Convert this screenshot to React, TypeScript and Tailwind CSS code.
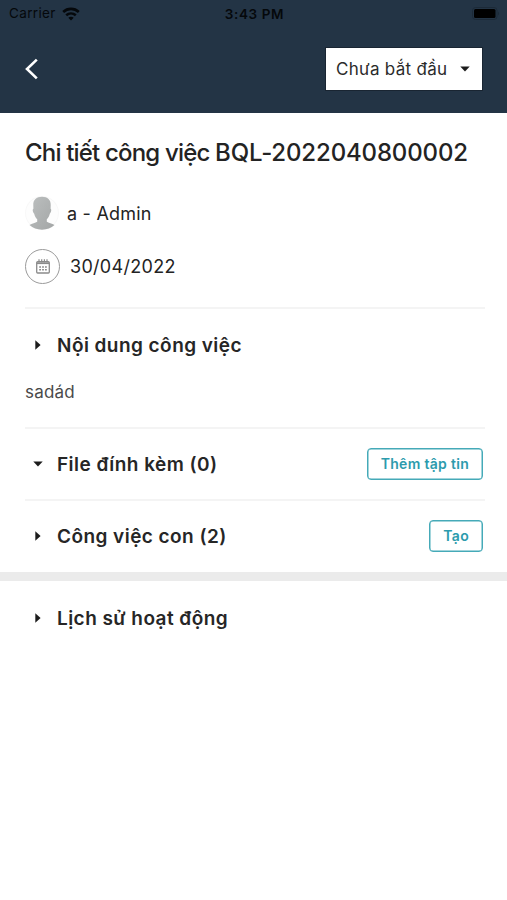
import type { ReactNode } from "react";

const Wifi = () => (
  <svg width="18" height="14" viewBox="0 0 18 14" fill="none">
    <path d="M1.2 4.9C5.6.9 12.4.9 16.8 4.9" stroke="#05080b" strokeWidth="2.7" />
    <path d="M4.2 8.3c2.8-2.5 6.8-2.5 9.6 0" stroke="#05080b" strokeWidth="2.5" />
    <path d="M9 13.6 6.3 10.8c1.5-1.4 3.9-1.4 5.4 0z" fill="#05080b" />
  </svg>
);

const Battery = () => (
  <svg width="28" height="13" viewBox="0 0 28 13" fill="none">
    <rect x="0.5" y="0.5" width="24.5" height="12" rx="3" stroke="#1c2a38" />
    <rect x="2" y="2" width="21.5" height="9" rx="1.5" fill="#000" />
    <path d="M26.2 4.5c1.2.4 1.2 3.6 0 4z" fill="#1c2a38" />
  </svg>
);

const Avatar = () => (
  <svg width="34" height="34" viewBox="0 0 34 34">
    <defs>
      <linearGradient id="person" x1="0" y1="0" x2="1" y2="1">
        <stop offset="0" stopColor="#bcbfbf" />
        <stop offset="1" stopColor="#a3a6a6" />
      </linearGradient>
    </defs>
    <circle cx="17" cy="17" r="16.5" fill="#fdfdfd" stroke="#f8f8f8" />
    <path
      d="M17 .8c-5.600 0-9 3.200-8.700 8.200l.1 3.800c-1.100.1-.8 3.600.8 4.900.6 2.700 1.600 4.200 3 5.500v2.600c-1.700 1.400-5.200 1.600-7.700 3.300C7.800 32.300 12 33.700 17 33.700s9.200-1.400 12.500-4.600c-2.500-1.700-6-1.900-7.700-3.300v-2.600c1.400-1.300 2.400-2.800 3-5.500 1.600-1.300 1.900-4.800.8-4.900l.1-3.800C26 4 22.600.8 17 .8z"
      fill="url(#person)"
    />
  </svg>
);

const Calendar = () => (
  <svg width="14" height="15" viewBox="0 0 14 15" fill="none" stroke="#8b8b8b">
    <rect x="0.7" y="2.7" width="12.6" height="11.3" rx="1" strokeWidth="1.3" />
    <path d="M.7 4.2h12.6" strokeWidth="1.8" />
    <path d="M3 .3v3M5.7.3v3M8.4.3v3M11 .3v3" strokeWidth="1.2" />
    <path d="M3.2 8h1.8M6.1 8h1.8M9 8h1.8M3.2 10.7h1.8M6.1 10.7h1.8M9 10.7h1.8" strokeWidth="1.4" />
  </svg>
);

const CaretRight = () => (
  <svg width="6" height="10" viewBox="0 0 6 10" fill="#1c1c1c">
    <path d="M.3.3 5.6 5 .3 9.7z" />
  </svg>
);

const CaretDown = () => (
  <svg width="10" height="6" viewBox="0 0 10 6" fill="#1c1c1c">
    <path d="M.3.5h9.4L5 5.5z" />
  </svg>
);

const Divider = () => <div className="mr-[22px] ml-[25px] h-[2px] bg-[#f4f4f4]" />;

type SectionProps = {
  title: ReactNode;
  open?: boolean;
  action?: string;
};

const Section = ({ title, open, action }: SectionProps) => (
  <div className="flex h-8 items-center pr-6 pl-[32px]">
    <span className="flex w-[11px] justify-center">{open ? <CaretDown /> : <CaretRight />}</span>
    <h2 className="ml-[14px] flex-1 pt-[3px] text-[19px] font-semibold tracking-[0.45px] text-[#262626]">{title}</h2>
    {action && (
      <button className="h-8 rounded-[4px] border-[1.5px] border-[#45aab8] px-[13px] pb-px text-[14px] font-semibold tracking-[0.3px] whitespace-nowrap text-[#2c9bad] shadow-[inset_0_0_0_0.5px_#45aab8]">
        {action}
      </button>
    )}
  </div>
);

export default function App() {
  return (
    <div className="h-[900px] w-full overflow-hidden bg-white font-['Inter',sans-serif] text-[#232323]">
      {/* Status bar + header */}
      <header className="h-[113px] bg-[#233445]">
        <div className="grid h-7 grid-cols-3 items-center pr-[7px] pl-[9px] text-[13.5px] text-[#05080b]">
          <div className="flex items-center gap-[6px] pb-px">
            <span className="tracking-[0.35px]">Carrier</span>
            <Wifi />
          </div>
          <span className="text-center font-semibold tracking-[0.6px]">3:43 PM</span>
          <div className="flex justify-end pb-px">
            <Battery />
          </div>
        </div>
        <div className="mt-5 flex h-[42px] items-center justify-between pr-[24px] pl-[25px]">
          <svg width="13" height="22" viewBox="0 0 13 22" fill="none" stroke="#fff" strokeWidth="2.6">
            <path d="M11.8 1.6 2 11l9.8 9.4" />
          </svg>
          <button className="flex h-[44px] w-[158px] items-center justify-between border border-[#192532] bg-white pr-[12px] pl-[10px] text-[17px] tracking-[0.3px] text-[#2b2b2b]">
            <span className="pt-px">Chưa bắt đầu</span>
            <CaretDown />
          </button>
        </div>
      </header>

      {/* Task summary */}
      <h1 className="mt-[22px] ml-[25px] h-9 text-[24px] leading-9 font-medium tracking-[-0.15px] whitespace-nowrap">
        <span className="tracking-[-0.82px]">Chi tiết công việc </span>
        BQL-2022040800002
      </h1>
      <div className="mt-[25px] ml-[25px] flex h-[34px] items-center gap-2 text-[18px] tracking-[0.22px]">
        <Avatar />
        <span>a - Admin</span>
      </div>
      <div className="mt-[18px] ml-[25px] flex h-[36px] items-center gap-[10px] text-[18px] tracking-[0.3px]">
        <span className="flex size-[35px] items-center justify-center rounded-full border-[1.5px] border-[#9b9b9b]">
          <Calendar />
        </span>
        <span>30/04/2022</span>
      </div>

      {/* Sections */}
      <div className="mt-[23px]">
        <Divider />
      </div>
      <div className="mt-5">
        <Section title="Nội dung công việc" />
      </div>
      <p className="mt-[19px] ml-[25px] h-6 text-[17px] leading-6 tracking-[0.2px] text-[#4a4a4a]">sadád</p>
      <div className="mt-[23px] mb-[19px]">
        <Divider />
      </div>
      <Section title="File đính kèm (0)" open action="Thêm tập tin" />
      <div className="my-[19px]">
        <Divider />
      </div>
      <Section title="Công việc con (2)" action="Tạo" />
      <div className="mt-[20px] mb-[21px] h-[9px] bg-[#ebebeb]" />
      <Section title="Lịch sử hoạt động" />
    </div>
  );
}
